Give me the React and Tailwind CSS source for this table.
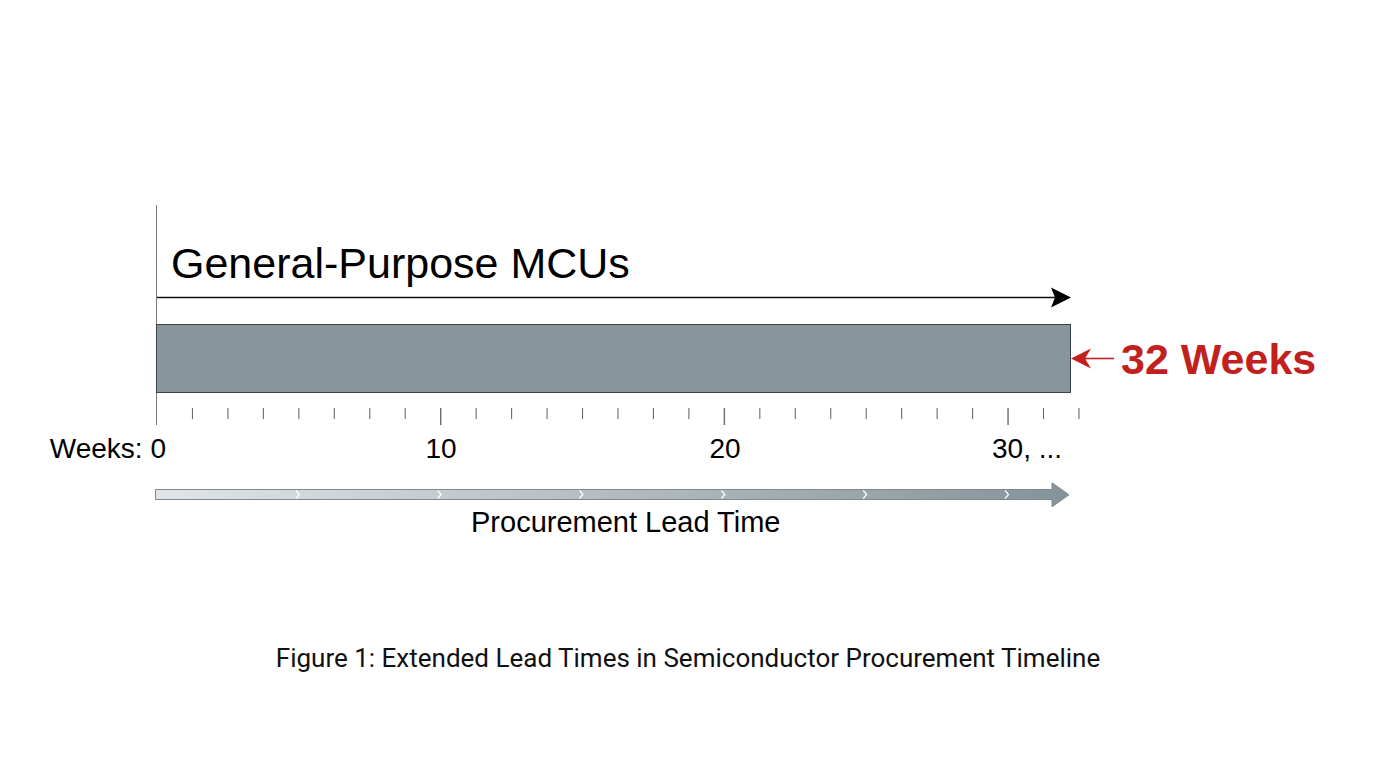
import React from 'react';

const TICK = 35.46; // px between ticks (1.25 weeks)

const Ticks = () => {
    const ticks = [];
    for (let i = 1; i <= 26; i++) {
        const major = i % 8 === 0;
        ticks.push(
            <line key={i} x1={i * TICK} x2={i * TICK} y1={15} y2={major ? 32 : 26} stroke="#6b6b6b" strokeWidth={major ? 1.4 : 1.1} />
        );
    }
    return (
        <svg width="930" height="32" className="block overflow-visible">
            {ticks}
        </svg>
    );
};

const LeadArrow = () => {
    const chevrons = [1, 2, 3, 4, 5, 6].map((i) => i * 4 * TICK + 1);
    return (
        <svg width="916" height="26" className="block">
            <defs>
                <linearGradient id="lead" x1="0" x2="1" y1="0" y2="0">
                    <stop offset="0" stopColor="#e1e5e7" />
                    <stop offset="1" stopColor="#84939a" />
                </linearGradient>
            </defs>
            <path d="M0.5 7.5 H897 V0.8 L914 12.8 L897 24.8 V17.5 H0.5 Z" fill="url(#lead)" stroke="#7d8a90" strokeWidth="1" />
            {chevrons.map((x) => (
                <path key={x} d={`M${x - 2} 8.5 L${x + 1.5} 12.5 L${x - 2} 16.5`} fill="none" stroke="#ffffff" strokeWidth="1.2" />
            ))}
        </svg>
    );
};

export default function App() {
    return (
        <div className="w-[1376px] h-[768px] bg-white overflow-hidden pt-[205px]" style={{ fontFamily: '"Liberation Sans", Arial, sans-serif' }}>
            {/* Chart area with y axis */}
            <div className="ml-[156px] w-[914px] flex flex-col border-l border-[#7c7c7c]">
                <h1 className="mt-[37px] pl-[14px] h-[43px] text-[43px] leading-[43px] text-black font-normal whitespace-nowrap">
                    General-Purpose MCUs
                </h1>

                <svg width="914" height="21" className="block mt-[2px]">
                    <line x1="0" x2="900" y1="10.5" y2="10.5" stroke="#111" strokeWidth="1.6" />
                    <path d="M894 0.5 L914 10.5 L894 20.5 L898 10.5 Z" fill="#000" />
                </svg>

                <div className="mt-[16px] flex items-center">
                    <div className="-ml-px w-[915px] h-[69px] shrink-0 bg-[#87969c] border border-[#3d4447]" />
                    <svg width="43" height="21" className="block shrink-0">
                        <line x1="14" x2="43" y1="10.5" y2="10.5" stroke="#c21f1f" strokeWidth="1.6" />
                        <path d="M0 10.5 L20 0.5 L14 10.5 L20 20.5 Z" fill="#c21f1f" />
                    </svg>
                    <span className="ml-[7px] shrink-0 whitespace-nowrap text-[43px] leading-[42px] font-bold text-[#c21f1f]">
                        32 Weeks
                    </span>
                </div>

                <Ticks />
            </div>

            {/* Axis labels */}
            <div className="mt-[10px] flex h-[28px] text-[28px] leading-[28px] text-black whitespace-nowrap">
                <div className="w-[166px] text-right">Weeks: 0</div>
                <div className="ml-[133px] w-[284px] text-center">10</div>
                <div className="w-[284px] text-center">20</div>
                <div className="ml-[125px]">30, ...</div>
            </div>

            <div className="mt-[19px] ml-[155px]">
                <LeadArrow />
            </div>

            <div className="ml-[471px] h-[29px] text-[29px] leading-[29px] text-black whitespace-nowrap">
                Procurement Lead Time
            </div>

            <p className="mt-[108px] text-center text-[26px] leading-[26px] text-[#111]" style={{ fontFamily: 'Roboto, "Noto Sans", sans-serif' }}>
                Figure 1: Extended Lead Times in Semiconductor Procurement Timeline
            </p>
        </div>
    );
}
